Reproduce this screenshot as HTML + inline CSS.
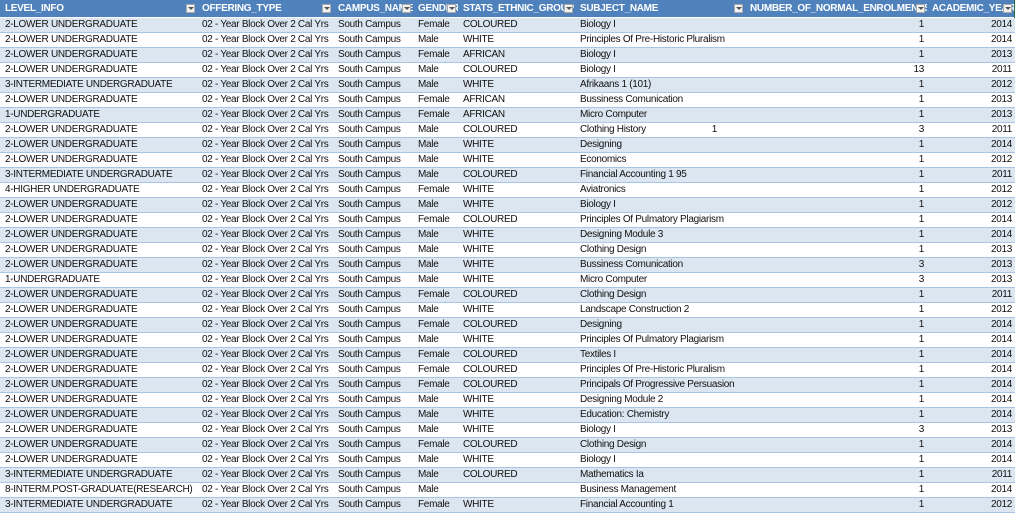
<!DOCTYPE html><html><head><style>
body{margin:0;width:1015px;height:512px;overflow:hidden;background:#fff;font-family:"Liberation Sans",Arial,sans-serif;font-size:10px;letter-spacing:-0.3px;color:#111}
table{border-collapse:collapse;table-layout:fixed;width:1015px}
td{height:14px;padding:0 0 0 5px;white-space:nowrap;overflow:hidden;border-bottom:1px solid #a9c4e4;line-height:14px;vertical-align:bottom}
tr.h td{background:#4f81bd;color:#fff;font-weight:bold;height:17px;line-height:17px;border-bottom:1px solid #fff;position:relative;padding-right:12px}
tr.h td i{position:absolute;right:2px;top:4px;width:9px;height:9px;background:#f2f2f2;border:1px solid #aaa;box-sizing:border-box}
tr.h td i:after{content:"";position:absolute;left:1px;top:2px;border:3px solid transparent;border-top:3px solid #555}
tr:nth-child(even) td{background:#dce6f1}
td.r{text-align:right;padding:0 3px 0 0}
</style></head><body><table>
<colgroup><col style="width:197px"><col style="width:136px"><col style="width:80px"><col style="width:45px"><col style="width:117px"><col style="width:170px"><col style="width:182px"><col style="width:88px"></colgroup>
<tr class="h"><td>LEVEL_INFO<i></i></td><td>OFFERING_TYPE<i></i></td><td>CAMPUS_NAME<i></i></td><td>GENDER<i></i></td><td>STATS_ETHNIC_GROUP<i></i></td><td>SUBJECT_NAME<i></i></td><td>NUMBER_OF_NORMAL_ENROLMENTS<i></i></td><td style="border-right:2px solid #217346">ACADEMIC_YEAR<i></i></td></tr>
<tr><td>2-LOWER UNDERGRADUATE</td><td>02 - Year Block Over 2 Cal Yrs</td><td>South Campus</td><td>Female</td><td>COLOURED</td><td>Biology I</td><td class="r">1</td><td class="r">2014</td></tr>
<tr><td>2-LOWER UNDERGRADUATE</td><td>02 - Year Block Over 2 Cal Yrs</td><td>South Campus</td><td>Male</td><td>WHITE</td><td>Principles Of Pre-Historic Pluralism</td><td class="r">1</td><td class="r">2014</td></tr>
<tr><td>2-LOWER UNDERGRADUATE</td><td>02 - Year Block Over 2 Cal Yrs</td><td>South Campus</td><td>Female</td><td>AFRICAN</td><td>Biology I</td><td class="r">1</td><td class="r">2013</td></tr>
<tr><td>2-LOWER UNDERGRADUATE</td><td>02 - Year Block Over 2 Cal Yrs</td><td>South Campus</td><td>Male</td><td>COLOURED</td><td>Biology I</td><td class="r">13</td><td class="r">2011</td></tr>
<tr><td>3-INTERMEDIATE UNDERGRADUATE</td><td>02 - Year Block Over 2 Cal Yrs</td><td>South Campus</td><td>Male</td><td>WHITE</td><td>Afrikaans 1 (101)</td><td class="r">1</td><td class="r">2012</td></tr>
<tr><td>2-LOWER UNDERGRADUATE</td><td>02 - Year Block Over 2 Cal Yrs</td><td>South Campus</td><td>Female</td><td>AFRICAN</td><td>Bussiness Comunication</td><td class="r">1</td><td class="r">2013</td></tr>
<tr><td>1-UNDERGRADUATE</td><td>02 - Year Block Over 2 Cal Yrs</td><td>South Campus</td><td>Female</td><td>AFRICAN</td><td>Micro Computer</td><td class="r">1</td><td class="r">2013</td></tr>
<tr><td>2-LOWER UNDERGRADUATE</td><td>02 - Year Block Over 2 Cal Yrs</td><td>South Campus</td><td>Male</td><td>COLOURED</td><td>Clothing History<span style="position:relative;left:66px">1</span></td><td class="r">3</td><td class="r">2011</td></tr>
<tr><td>2-LOWER UNDERGRADUATE</td><td>02 - Year Block Over 2 Cal Yrs</td><td>South Campus</td><td>Male</td><td>WHITE</td><td>Designing</td><td class="r">1</td><td class="r">2014</td></tr>
<tr><td>2-LOWER UNDERGRADUATE</td><td>02 - Year Block Over 2 Cal Yrs</td><td>South Campus</td><td>Male</td><td>WHITE</td><td>Economics</td><td class="r">1</td><td class="r">2012</td></tr>
<tr><td>3-INTERMEDIATE UNDERGRADUATE</td><td>02 - Year Block Over 2 Cal Yrs</td><td>South Campus</td><td>Male</td><td>COLOURED</td><td>Financial Accounting 1 95</td><td class="r">1</td><td class="r">2011</td></tr>
<tr><td>4-HIGHER UNDERGRADUATE</td><td>02 - Year Block Over 2 Cal Yrs</td><td>South Campus</td><td>Female</td><td>WHITE</td><td>Aviatronics</td><td class="r">1</td><td class="r">2012</td></tr>
<tr><td>2-LOWER UNDERGRADUATE</td><td>02 - Year Block Over 2 Cal Yrs</td><td>South Campus</td><td>Male</td><td>WHITE</td><td>Biology I</td><td class="r">1</td><td class="r">2012</td></tr>
<tr><td>2-LOWER UNDERGRADUATE</td><td>02 - Year Block Over 2 Cal Yrs</td><td>South Campus</td><td>Female</td><td>COLOURED</td><td>Principles Of Pulmatory Plagiarism</td><td class="r">1</td><td class="r">2014</td></tr>
<tr><td>2-LOWER UNDERGRADUATE</td><td>02 - Year Block Over 2 Cal Yrs</td><td>South Campus</td><td>Male</td><td>WHITE</td><td>Designing Module 3</td><td class="r">1</td><td class="r">2014</td></tr>
<tr><td>2-LOWER UNDERGRADUATE</td><td>02 - Year Block Over 2 Cal Yrs</td><td>South Campus</td><td>Male</td><td>WHITE</td><td>Clothing Design</td><td class="r">1</td><td class="r">2013</td></tr>
<tr><td>2-LOWER UNDERGRADUATE</td><td>02 - Year Block Over 2 Cal Yrs</td><td>South Campus</td><td>Male</td><td>WHITE</td><td>Bussiness Comunication</td><td class="r">3</td><td class="r">2013</td></tr>
<tr><td>1-UNDERGRADUATE</td><td>02 - Year Block Over 2 Cal Yrs</td><td>South Campus</td><td>Male</td><td>WHITE</td><td>Micro Computer</td><td class="r">3</td><td class="r">2013</td></tr>
<tr><td>2-LOWER UNDERGRADUATE</td><td>02 - Year Block Over 2 Cal Yrs</td><td>South Campus</td><td>Female</td><td>COLOURED</td><td>Clothing Design</td><td class="r">1</td><td class="r">2011</td></tr>
<tr><td>2-LOWER UNDERGRADUATE</td><td>02 - Year Block Over 2 Cal Yrs</td><td>South Campus</td><td>Male</td><td>WHITE</td><td>Landscape Construction 2</td><td class="r">1</td><td class="r">2012</td></tr>
<tr><td>2-LOWER UNDERGRADUATE</td><td>02 - Year Block Over 2 Cal Yrs</td><td>South Campus</td><td>Female</td><td>COLOURED</td><td>Designing</td><td class="r">1</td><td class="r">2014</td></tr>
<tr><td>2-LOWER UNDERGRADUATE</td><td>02 - Year Block Over 2 Cal Yrs</td><td>South Campus</td><td>Male</td><td>WHITE</td><td>Principles Of Pulmatory Plagiarism</td><td class="r">1</td><td class="r">2014</td></tr>
<tr><td>2-LOWER UNDERGRADUATE</td><td>02 - Year Block Over 2 Cal Yrs</td><td>South Campus</td><td>Female</td><td>COLOURED</td><td>Textiles I</td><td class="r">1</td><td class="r">2014</td></tr>
<tr><td>2-LOWER UNDERGRADUATE</td><td>02 - Year Block Over 2 Cal Yrs</td><td>South Campus</td><td>Female</td><td>COLOURED</td><td>Principles Of Pre-Historic Pluralism</td><td class="r">1</td><td class="r">2014</td></tr>
<tr><td>2-LOWER UNDERGRADUATE</td><td>02 - Year Block Over 2 Cal Yrs</td><td>South Campus</td><td>Female</td><td>COLOURED</td><td>Principals Of Progressive Persuasion</td><td class="r">1</td><td class="r">2014</td></tr>
<tr><td>2-LOWER UNDERGRADUATE</td><td>02 - Year Block Over 2 Cal Yrs</td><td>South Campus</td><td>Male</td><td>WHITE</td><td>Designing Module 2</td><td class="r">1</td><td class="r">2014</td></tr>
<tr><td>2-LOWER UNDERGRADUATE</td><td>02 - Year Block Over 2 Cal Yrs</td><td>South Campus</td><td>Male</td><td>WHITE</td><td>Education: Chemistry</td><td class="r">1</td><td class="r">2014</td></tr>
<tr><td>2-LOWER UNDERGRADUATE</td><td>02 - Year Block Over 2 Cal Yrs</td><td>South Campus</td><td>Male</td><td>WHITE</td><td>Biology I</td><td class="r">3</td><td class="r">2013</td></tr>
<tr><td>2-LOWER UNDERGRADUATE</td><td>02 - Year Block Over 2 Cal Yrs</td><td>South Campus</td><td>Female</td><td>COLOURED</td><td>Clothing Design</td><td class="r">1</td><td class="r">2014</td></tr>
<tr><td>2-LOWER UNDERGRADUATE</td><td>02 - Year Block Over 2 Cal Yrs</td><td>South Campus</td><td>Male</td><td>WHITE</td><td>Biology I</td><td class="r">1</td><td class="r">2014</td></tr>
<tr><td>3-INTERMEDIATE UNDERGRADUATE</td><td>02 - Year Block Over 2 Cal Yrs</td><td>South Campus</td><td>Male</td><td>COLOURED</td><td>Mathematics Ia</td><td class="r">1</td><td class="r">2011</td></tr>
<tr><td>8-INTERM.POST-GRADUATE(RESEARCH)</td><td>02 - Year Block Over 2 Cal Yrs</td><td>South Campus</td><td>Male</td><td></td><td>Business Management</td><td class="r">1</td><td class="r">2014</td></tr>
<tr><td>3-INTERMEDIATE UNDERGRADUATE</td><td>02 - Year Block Over 2 Cal Yrs</td><td>South Campus</td><td>Female</td><td>WHITE</td><td>Financial Accounting 1</td><td class="r">1</td><td class="r">2012</td></tr>
</table></body></html>
